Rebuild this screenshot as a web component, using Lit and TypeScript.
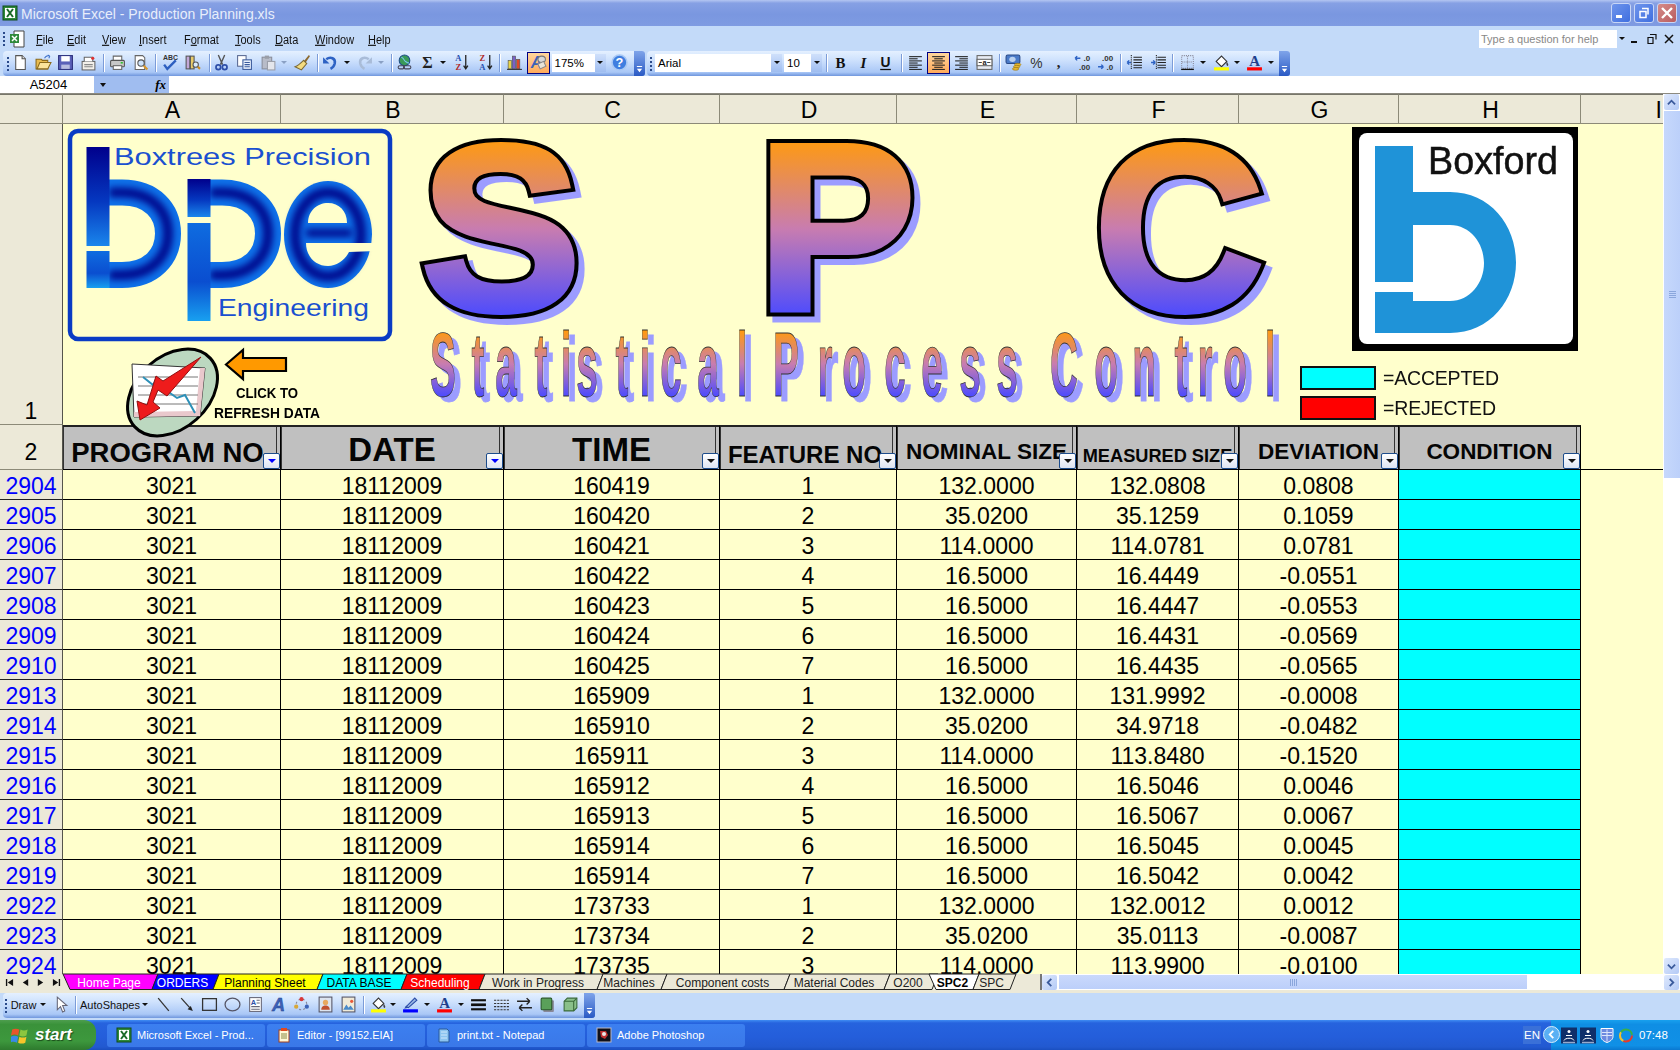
import { LitElement, html, css, svg, TemplateResult } from "lit";
import { customElement } from "lit/decorators.js";

// one toolbar entry: c = centre x on the page, k = icon key or special slot
type Item = { c: number; k: string; w?: number };

const dd = "dd";
const sep = "sep";

const standardBar: Item[] = [
  { c: 8, k: "grip", w: 4 }, { c: 20, k: "new" }, { c: 43, k: "open" }, { c: 65, k: "save" }, { c: 88, k: "perm" },
  { c: 103.5, k: sep, w: 1 }, { c: 117, k: "print" }, { c: 140, k: "preview" }, { c: 155, k: sep, w: 1 },
  { c: 170, k: "spell" }, { c: 192, k: "research" }, { c: 209, k: sep, w: 1 }, { c: 221, k: "cut" }, { c: 244, k: "copy" },
  { c: 268, k: "paste" }, { c: 284, k: "ddg", w: 8 }, { c: 302, k: "brush" }, { c: 317, k: sep, w: 1 },
  { c: 330, k: "undo" }, { c: 347, k: dd, w: 8 }, { c: 364, k: "redo" }, { c: 381, k: "ddg", w: 8 }, { c: 391, k: sep, w: 1 },
  { c: 404, k: "link" }, { c: 427, k: "sigma" }, { c: 443, k: dd, w: 8 }, { c: 461, k: "az" }, { c: 485, k: "za" },
  { c: 499, k: sep, w: 1 }, { c: 514, k: "chart" }, { c: 538, k: "drawing", w: 23 }, { c: 578.5, k: "zoom", w: 54 }, { c: 619, k: "help" },
];

const formatBar: Item[] = [
  { c: 651, k: "grip", w: 4 }, { c: 718.5, k: "font", w: 127 }, { c: 803, k: "size", w: 38 }, { c: 826, k: sep, w: 1 },
  { c: 840, k: "bold" }, { c: 863, k: "italic" }, { c: 885, k: "under" }, { c: 901, k: sep, w: 1 },
  { c: 915, k: "left" }, { c: 938, k: "center", w: 23 }, { c: 961, k: "right" }, { c: 984, k: "merge" }, { c: 999, k: sep, w: 1 },
  { c: 1013, k: "currency" }, { c: 1036, k: "percent" }, { c: 1058, k: "comma" }, { c: 1082, k: "incdec" }, { c: 1105, k: "decdec" },
  { c: 1120, k: sep, w: 1 }, { c: 1134, k: "outdent" }, { c: 1158, k: "indent" }, { c: 1172, k: sep, w: 1 },
  { c: 1187, k: "borders" }, { c: 1203, k: dd, w: 8 }, { c: 1221, k: "fill" }, { c: 1237, k: dd, w: 8 },
  { c: 1254, k: "fontcolor" }, { c: 1271, k: dd, w: 8 },
];

const drawBar: Item[] = [
  { c: 6, k: "grip", w: 4 }, { c: 23.5, k: "t:Draw", w: 26 }, { c: 43, k: dd, w: 8 }, { c: 60, k: "cursor" }, { c: 75.5, k: sep, w: 1 },
  { c: 110, k: "t:AutoShapes", w: 60 }, { c: 145, k: dd, w: 8 }, { c: 163, k: "line" }, { c: 186, k: "arrow" }, { c: 209, k: "rect" },
  { c: 232, k: "oval" }, { c: 255, k: "textbox" }, { c: 278, k: "wordart" }, { c: 301, k: "diagram" }, { c: 325, k: "clipart" },
  { c: 348, k: "picture" }, { c: 363, k: sep, w: 1 }, { c: 378, k: "fill" }, { c: 393, k: dd, w: 8 }, { c: 410, k: "linecolor" },
  { c: 427, k: dd, w: 8 }, { c: 444.5, k: "fontcolor" }, { c: 461, k: dd, w: 8 }, { c: 478, k: "linestyle" }, { c: 501, k: "dash" },
  { c: 524, k: "arrows" }, { c: 547, k: "shadow" }, { c: 570, k: "cube" },
];

const lines = (xs: number[], ws: number[]) =>
  ws.map((w, i) => svg`<rect x=${xs[i]} y=${2 + i * 2} width=${w} height="1" fill="#222"/>`);

const icons: Record<string, TemplateResult | TemplateResult[]> = {
  new: svg`<path d="M3.5 1.5h6l3 3v10h-9z" fill="#fff" stroke="#555"/><path d="M9.500 1.500v3h3" fill="#ddd" stroke="#555"/>`,
  open: svg`<path d="M1 5h5l1 1h5v8H1z" fill="#e8bb50" stroke="#8a6a1c"/><path d="M2 14l2.500-6H15l-3 6z" fill="#fbe39a" stroke="#8a6a1c"/><path d="M9 4c1-2 3-3 5-2M14 2l-2-1M14 2l-1 2" fill="none" stroke="#3a6ec8"/>`,
  save: svg`<rect x="1.500" y="1.500" width="13" height="13" fill="#5a60b8" stroke="#2b2f7c"/><rect x="4" y="2" width="8" height="5" fill="#fff"/><rect x="4" y="10" width="8" height="4" fill="#b8bce0"/>`,
  perm: svg`<rect x="2" y="7" width="12" height="8" fill="#f3f0ea" stroke="#666"/><path d="M4 7V3h8v4" fill="#fff" stroke="#666"/><circle cx="12" cy="4" r="1.500" fill="#e03030"/><path d="M4 10h8M4 12h8" stroke="#888"/>`,
  print: svg`<path d="M4 6V2h8v4" fill="#fff" stroke="#666"/><rect x="1.500" y="6" width="13" height="6" rx="1" fill="#c8c8c8" stroke="#555"/><rect x="4" y="11" width="8" height="3.500" fill="#fff" stroke="#666"/><rect x="11" y="7.500" width="2" height="1.500" fill="#2dc22d"/>`,
  preview: svg`<path d="M3 1.500h7l2 2v11H3z" fill="#fff" stroke="#666"/><circle cx="8.500" cy="8.500" r="3" fill="#cfe4fb" stroke="#555"/><path d="M11 11l3.500 3.500" stroke="#d8982c" stroke-width="2"/>`,
  spell: svg`<text x="8" y="6" font-size="6.500" font-weight="700" text-anchor="middle" font-family="Liberation Sans" fill="#333">ABC</text><path d="M2 10l3 4 8-8" fill="none" stroke="#2d5fc0" stroke-width="2.200"/>`,
  research: svg`<rect x="2" y="2" width="3.500" height="12" fill="#c3a8d8" stroke="#555"/><rect x="6" y="2" width="3.500" height="12" fill="#e9cc6a" stroke="#555"/><circle cx="11" cy="10" r="2.500" fill="#dcecfb" stroke="#555"/><path d="M13 12l2 2" stroke="#c88a20" stroke-width="2"/>`,
  cut: svg`<path d="M5 1l4 9M11 1L7 10" stroke="#555" stroke-width="1.300"/><circle cx="5" cy="12.500" r="2.200" fill="none" stroke="#2d4ea8" stroke-width="1.600"/><circle cx="11" cy="12.500" r="2.200" fill="none" stroke="#2d4ea8" stroke-width="1.600"/>`,
  copy: svg`<rect x="1.500" y="1.500" width="8" height="10" fill="#fff" stroke="#5a6a94"/><rect x="6.500" y="5.500" width="8" height="9" fill="#e8f0fc" stroke="#3a5a9c"/><path d="M8 8h5M8 10h5M8 12h5" stroke="#3a5a9c"/>`,
  paste: svg`<rect x="2" y="3" width="9" height="11" fill="#b8bcc8" stroke="#8a8e9a"/><rect x="7" y="7" width="7" height="8" fill="#e4e6ec" stroke="#9a9ea8"/><rect x="4.500" y="1.500" width="4" height="3" fill="#9a9ea8"/>`,
  brush: svg`<path d="M9 7l5-6 1 1-4 6z" fill="#8c6a30"/><path d="M9 6l3 3-5 6-6-3c3-1 5-3 8-6z" fill="#f4dc80" stroke="#7c6a34"/>`,
  undo: svg`<path d="M4 5c4-3 9-1 8 4-.500 2-2 4-4 5" fill="none" stroke="#2d62c4" stroke-width="2.400"/><path d="M1 3v6h6z" fill="#2d62c4"/>`,
  redo: svg`<path d="M12 5c-4-3-9-1-8 4 .500 2 2 4 4 5" fill="none" stroke="#a9bcd8" stroke-width="2.400"/><path d="M15 3v6H9z" fill="#a9bcd8"/>`,
  link: svg`<circle cx="8" cy="6" r="5" fill="#3a9a58" stroke="#1e4e86"/><path d="M5 3c3 1 2 3 4 4s2 2 3 1" stroke="#7cc8ef" fill="none"/><rect x="2" y="11" width="6" height="3" rx="1.500" fill="none" stroke="#445"/><rect x="7" y="11" width="7" height="3" rx="1.500" fill="none" stroke="#445"/>`,
  sigma: svg`<text x="8" y="13" font-size="15" font-weight="700" text-anchor="middle" font-family="Liberation Serif" fill="#222">Σ</text>`,
  az: svg`<text x="5" y="7" font-size="8" font-weight="700" text-anchor="middle" font-family="Liberation Serif" fill="#2850b0">A</text><text x="5" y="15" font-size="8" font-weight="700" text-anchor="middle" font-family="Liberation Serif" fill="#b02828">Z</text><path d="M12 1v12M10 11l2 3 2-3" fill="none" stroke="#222" stroke-width="1.200"/>`,
  za: svg`<text x="5" y="7" font-size="8" font-weight="700" text-anchor="middle" font-family="Liberation Serif" fill="#b02828">Z</text><text x="5" y="15" font-size="8" font-weight="700" text-anchor="middle" font-family="Liberation Serif" fill="#2850b0">A</text><path d="M12 1v12M10 11l2 3 2-3" fill="none" stroke="#222" stroke-width="1.200"/>`,
  chart: svg`<rect x="2" y="6" width="3" height="8" fill="#e8d44a" stroke="#555" stroke-width=".6"/><rect x="6" y="2" width="3" height="12" fill="#7860c8" stroke="#555" stroke-width=".6"/><rect x="10" y="5" width="3" height="9" fill="#e04828" stroke="#555" stroke-width=".6"/><path d="M1 14.500h14" stroke="#333"/>`,
  drawing: svg`<text x="6" y="13" font-size="15" font-style="italic" font-weight="700" font-family="Liberation Sans" text-anchor="middle" fill="#3c62b8">A</text><ellipse cx="11" cy="5" rx="3.500" ry="3" fill="#d8d8d8" stroke="#777"/><rect x="8" y="8" width="6" height="5" fill="#e8e4d8" stroke="#888" transform="rotate(-25 11 10)"/>`,
  help: svg`<circle cx="8" cy="8" r="7" fill="#3f7ee0" stroke="#a8c8f4" stroke-width="1.500"/><text x="8" y="12.500" font-size="12" font-weight="700" text-anchor="middle" font-family="Liberation Sans" fill="#fff">?</text>`,
  bold: svg`<text x="8" y="13" font-size="14" font-weight="700" text-anchor="middle" font-family="Liberation Serif" fill="#111">B</text>`,
  italic: svg`<text x="8" y="13" font-size="14" font-weight="700" font-style="italic" text-anchor="middle" font-family="Liberation Serif" fill="#111">I</text>`,
  under: svg`<text x="8" y="12" font-size="13" font-weight="700" text-anchor="middle" font-family="Liberation Sans" fill="#111">U</text><rect x="3" y="14" width="10" height="1.200" fill="#111"/>`,
  left: lines([2, 2, 2, 2, 2, 2, 2], [12, 8, 12, 8, 12, 8, 12]),
  center: lines([2, 4, 2, 4, 2, 4, 2], [12, 8, 12, 8, 12, 8, 12]),
  right: lines([2, 6, 2, 6, 2, 6, 2], [12, 8, 12, 8, 12, 8, 12]),
  merge: svg`<rect x="1" y="1.500" width="14" height="13" fill="#e8ecf4" stroke="#666"/><rect x="1" y="5" width="14" height="6" fill="#fff" stroke="#666"/><text x="8" y="10.500" font-size="7" font-weight="700" text-anchor="middle" font-family="Liberation Sans" fill="#222">a</text><path d="M2.500 8h3M13.500 8h-3" stroke="#444"/>`,
  currency: svg`<rect x="1" y="1" width="13" height="8" rx="1.500" fill="#4a7ac8" stroke="#2a4a88"/><ellipse cx="7" cy="5" rx="3" ry="2.500" fill="#b8d0f0"/><ellipse cx="12" cy="10" rx="3" ry="1.300" fill="#e8b830" stroke="#8a6a10" stroke-width=".5"/><ellipse cx="11" cy="12" rx="3" ry="1.300" fill="#e8b830" stroke="#8a6a10" stroke-width=".5"/><ellipse cx="10" cy="14" rx="3" ry="1.300" fill="#e8b830" stroke="#8a6a10" stroke-width=".5"/>`,
  percent: svg`<text x="8" y="13" font-size="13" text-anchor="middle" font-family="Liberation Sans" fill="#333">%</text>`,
  comma: svg`<text x="8" y="12" font-size="14" font-weight="700" text-anchor="middle" font-family="Liberation Serif" fill="#222">,</text>`,
  incdec: svg`<path d="M1 4h5M1 4l2-2M1 4l2 2" stroke="#2d62c4" fill="none" stroke-width="1.300"/><text x="12" y="7" font-size="7.500" font-weight="700" text-anchor="middle" font-family="Liberation Sans" fill="#333">.0</text><text x="10" y="15" font-size="7.500" font-weight="700" text-anchor="middle" font-family="Liberation Sans" fill="#333">.00</text>`,
  decdec: svg`<path d="M1 12h5M6 12l-2-2M6 12l-2 2" stroke="#2d62c4" fill="none" stroke-width="1.300"/><text x="10" y="7" font-size="7.500" font-weight="700" text-anchor="middle" font-family="Liberation Sans" fill="#333">.00</text><text x="12" y="15" font-size="7.500" font-weight="700" text-anchor="middle" font-family="Liberation Sans" fill="#333">.0</text>`,
  outdent: svg`<path d="M7 3h8M7 5.500h8M7 8h8M7 10.500h8M7 13h8" stroke="#222"/><path d="M5 8H1M1 8l2-2M1 8l2 2" stroke="#2d62c4" fill="none" stroke-width="1.300"/><path d="M5 1v14" stroke="#222" stroke-dasharray="1 1"/>`,
  indent: svg`<path d="M7 3h8M7 5.500h8M7 8h8M7 10.500h8M7 13h8" stroke="#222"/><path d="M1 8h4M5 8L3 6M5 8l-2 2" stroke="#2d62c4" fill="none" stroke-width="1.300"/><path d="M6 1v14" stroke="#222" stroke-dasharray="1 1"/>`,
  borders: svg`<rect x="2.500" y="1.500" width="11" height="12" fill="none" stroke="#889" stroke-dasharray="1 1"/><path d="M8 2v12M3 7.500h10" stroke="#889" stroke-dasharray="1 1"/><path d="M2 14.500h12" stroke="#111" stroke-width="1.200"/>`,
  fill: svg`<path d="M3 7l5-5 5 5-5 5z" fill="#fff" stroke="#333"/><path d="M13 7c1 2 2 3 1 4s-2-2-1-4z" fill="#444"/><rect x="1" y="12.500" width="14" height="3" fill="#ffff00"/>`,
  linecolor: svg`<path d="M4 10l8-8 2 2-8 7z" fill="#9ab8e4" stroke="#2d4ea8"/><path d="M2 12l2-3 2 2z" fill="#2d4ea8"/><rect x="1" y="12.500" width="14" height="3" fill="#0000ff"/>`,
  fontcolor: svg`<text x="8" y="11.500" font-size="14" font-weight="700" text-anchor="middle" font-family="Liberation Serif" fill="#1f3f8c">A</text><rect x="1" y="12.500" width="14" height="3" fill="#ff0000"/>`,
  cursor: svg`<path d="M5 1v12l3-3 2 5 2-1-2-5h4z" fill="#fff" stroke="#667"/>`,
  line: svg`<path d="M3 2l10 12" stroke="#333" stroke-width="1.200"/>`,
  arrow: svg`<path d="M3 2l8 9" stroke="#333" stroke-width="1.200"/><path d="M14 14l-5-1.500 3-3z" fill="#222"/>`,
  rect: svg`<rect x="1.500" y="2.500" width="13" height="11" fill="none" stroke="#333" stroke-width="1.200"/>`,
  oval: svg`<ellipse cx="8" cy="8" rx="7" ry="6" fill="none" stroke="#556" stroke-width="1.200"/>`,
  textbox: svg`<rect x="2.500" y="1.500" width="11" height="13" fill="#fff" stroke="#667"/><text x="6" y="8" font-size="7" font-weight="700" text-anchor="middle" font-family="Liberation Sans" fill="#2d4ea8">A</text><path d="M9 4h3M9 6.500h3M4 10h8M4 12.500h8" stroke="#667"/>`,
  wordart: svg`<text x="8" y="14" font-size="17" font-weight="700" font-style="italic" text-anchor="middle" font-family="Liberation Sans" fill="#3c62b8" stroke="#1f3f8c" stroke-width=".4">A</text>`,
  diagram: svg`<circle cx="8" cy="8" r="5" fill="none" stroke="#889" stroke-dasharray="2 2"/><circle cx="8" cy="3" r="2" fill="#d83838"/><circle cx="3" cy="10" r="2" fill="#d8a838"/><circle cx="13" cy="10" r="2" fill="#3c62b8"/>`,
  clipart: svg`<rect x="2" y="1" width="12" height="14" fill="#dce4f0" stroke="#556"/><circle cx="8" cy="6" r="2.500" fill="#e8a860"/><path d="M4 13c0-3 2-4 4-4s4 1 4 4z" fill="#c05030"/>`,
  picture: svg`<rect x="2" y="1" width="12" height="14" fill="#f0ead8" stroke="#556"/><path d="M3 13l3-5 2 3 2-2 3 4z" fill="#4a8ac8"/><circle cx="11" cy="5" r="1.500" fill="#e85838"/>`,
  linestyle: svg`<rect x="1" y="3" width="14" height="2" fill="#111"/><rect x="1" y="7" width="14" height="2.500" fill="#111"/><rect x="1" y="11.500" width="14" height="2" fill="#111"/>`,
  dash: svg`<path d="M1 4h14M1 7h14M1 10h14M1 13h14" stroke="#333" stroke-dasharray="2 1"/>`,
  arrows: svg`<path d="M1 5h12M13 5l-3-3M13 5l-3 3M15 11H3M3 11l3-3M3 11l3 3" fill="none" stroke="#222" stroke-width="1.300"/>`,
  shadow: svg`<rect x="4" y="4" width="10" height="11" rx="1" fill="#889"/><rect x="2" y="2" width="10" height="11" rx="1" fill="#5aa05a" stroke="#2a5a2a"/>`,
  cube: svg`<path d="M2 5l3-3h9v9l-3 3H2z" fill="#8ac08a" stroke="#3a6a3a"/><path d="M2 5h9v9M11 5l3-3" fill="none" stroke="#3a6a3a"/>`,
  xl: svg`<rect x="1" y="1" width="14" height="14" fill="#2f8a3a" stroke="#0f4a1a"/><rect x="3" y="3" width="10" height="10" fill="#fff"/><path d="M5 4l6 8M11 4l-6 8" stroke="#1a6a28" stroke-width="2"/>`,
  editor: svg`<rect x="3" y="3" width="10" height="12" fill="#fff8d8" stroke="#a04020"/><rect x="5" y="1" width="6" height="3" fill="#e04820"/><path d="M5 7h6M5 9h6M5 11h6" stroke="#884"/>`,
  notepad: svg`<path d="M3 2h8l2 2v11H3z" fill="#8cc4f0" stroke="#2a5a9a"/><path d="M5 5h6M5 8h6M5 11h6" stroke="#cfe8fb"/>`,
  photoshop: svg`<rect x="1" y="1" width="14" height="14" fill="#101018" stroke="#b8b8c8"/><path d="M4 4h6l2 4-3 4-4-2z" fill="#c03030"/><circle cx="8" cy="7" r="2" fill="#e8e8e8"/>`,
  flag: svg`<path d="M1 3c2-1 4-1 6 0l-1 5c-2-1-4-1-6 0z" fill="#e8552a"/><path d="M8 3c2 1 4 1 6 0l-1 5c-2 1-4 1-6 0z" fill="#8cc63f"/><path d="M0 9c2-1 4-1 6 0l-1 5c-2-1-4-1-6 0z" fill="#3a8ae8"/><path d="M7 9c2 1 4 1 6 0l-1 5c-2 1-4 1-6 0z" fill="#f7c52a"/>`,
  tray: svg`<rect x="0" y="0" width="16" height="16" fill="#0f2f6a"/><circle cx="8" cy="4" r="1.500" fill="#fff"/><path d="M5 8h6M3 13c1-3 9-3 10 0" stroke="#fff" fill="none"/><path d="M2 15h12" stroke="#9ac" stroke-width="1.500"/>`,
  shield: svg`<path d="M2 1h12v8c0 3-3 5-6 6-3-1-6-3-6-6z" fill="#6c8ae0" stroke="#fff"/><path d="M8 2v12M3 5h10M3 8h10" stroke="#dce6fb"/>`,
  swirl: svg`<circle cx="8" cy="8" r="6" fill="none" stroke="#e83a2a" stroke-width="2" stroke-dasharray="12 26"/><circle cx="8" cy="8" r="6" fill="none" stroke="#f2c030" stroke-width="2" stroke-dasharray="10 28" stroke-dashoffset="-12"/><circle cx="8" cy="8" r="6" fill="none" stroke="#3ab04a" stroke-width="2" stroke-dasharray="14 24" stroke-dashoffset="-22"/>`,
};

// x = left edge of the label on the page, u = index of the accelerator letter
const menus = [
  { label: "File", u: 0, x: 36 },
  { label: "Edit", u: 0, x: 67 },
  { label: "View", u: 0, x: 102 },
  { label: "Insert", u: 0, x: 139 },
  { label: "Format", u: 1, x: 184 },
  { label: "Tools", u: 0, x: 235 },
  { label: "Data", u: 0, x: 275 },
  { label: "Window", u: 0, x: 315 },
  { label: "Help", u: 0, x: 368 },
];

const columns = ["A", "B", "C", "D", "E", "F", "G", "H"];

const headers = [
  { label: "PROGRAM NO", cls: "h27", filtered: true },
  { label: "DATE", cls: "h32", filtered: true },
  { label: "TIME", cls: "h32", filtered: false },
  { label: "FEATURE NO", cls: "h24", filtered: false },
  { label: "NOMINAL SIZE", cls: "h22", filtered: false },
  { label: "MEASURED SIZE", cls: "h18", filtered: false },
  { label: "DEVIATION", cls: "h22", filtered: false },
  { label: "CONDITION", cls: "h22", filtered: false },
];

const rows = [
  ["2904", "160419", "1", "132.0000", "132.0808", "0.0808"],
  ["2905", "160420", "2", "35.0200", "35.1259", "0.1059"],
  ["2906", "160421", "3", "114.0000", "114.0781", "0.0781"],
  ["2907", "160422", "4", "16.5000", "16.4449", "-0.0551"],
  ["2908", "160423", "5", "16.5000", "16.4447", "-0.0553"],
  ["2909", "160424", "6", "16.5000", "16.4431", "-0.0569"],
  ["2910", "160425", "7", "16.5000", "16.4435", "-0.0565"],
  ["2913", "165909", "1", "132.0000", "131.9992", "-0.0008"],
  ["2914", "165910", "2", "35.0200", "34.9718", "-0.0482"],
  ["2915", "165911", "3", "114.0000", "113.8480", "-0.1520"],
  ["2916", "165912", "4", "16.5000", "16.5046", "0.0046"],
  ["2917", "165913", "5", "16.5000", "16.5067", "0.0067"],
  ["2918", "165914", "6", "16.5000", "16.5045", "0.0045"],
  ["2919", "165914", "7", "16.5000", "16.5042", "0.0042"],
  ["2922", "173733", "1", "132.0000", "132.0012", "0.0012"],
  ["2923", "173734", "2", "35.0200", "35.0113", "-0.0087"],
  ["2924", "173735", "3", "114.0000", "113.9900", "-0.0100"],
];

const sheets = [
  { name: "Home Page", w: 86, cls: "magenta" },
  { name: "ORDERS", w: 61, cls: "blue" },
  { name: "Planning Sheet", w: 104, cls: "yellow" },
  { name: "DATA BASE", w: 84, cls: "cyan" },
  { name: "Scheduling", w: 78, cls: "red" },
  { name: "Work in Progress", w: 118, cls: "" },
  { name: "Machines", w: 64, cls: "" },
  { name: "Component costs", w: 123, cls: "" },
  { name: "Material Codes", w: 100, cls: "" },
  { name: "O200", w: 48, cls: "" },
  { name: "SPC2", w: 41, cls: "active" },
  { name: "SPC", w: 37, cls: "" },
];

const tasks = [
  { icon: "xl", label: "Microsoft Excel - Prod..." },
  { icon: "editor", label: "Editor - [99152.EIA]" },
  { icon: "notepad", label: "print.txt - Notepad" },
  { icon: "photoshop", label: "Adobe Photoshop" },
];

const title = "Statistical Process Control";
const titleX = [443, 478, 506, 541, 566, 587, 622, 645, 671, 708, 742, 765, 786, 825, 854, 895, 932, 970, 1007, 1035, 1064, 1106, 1144, 1181, 1205, 1235, 1270];
const titleScale = 0.43;

@customElement("app-root")
export class AppRoot extends LitElement {
  static styles = css`
    :host { display: block; width: 1680px; height: 1050px; overflow: hidden; font-family: "Liberation Sans", Arial, sans-serif; background: #c3daf9; color: #000; }
    .app { display: flex; flex-direction: column; height: 1050px; }

    .titlebar { height: 26px; display: flex; align-items: center; gap: 3px; padding: 0 3px 0 2px; background: linear-gradient(#b4c6f2 0, #86a0e4 12%, #7a97e0 55%, #7f9be2 100%); color: #e8eefb; font-size: 14px; flex: none; box-sizing: border-box; }
    .titlebar .name { flex: 1; padding-top: 1px; }
    .win { width: 20px; height: 20px; border-radius: 3px; border: 1px solid #c8d6f6; background: linear-gradient(135deg, #6f95ec, #3f6fe0); box-sizing: border-box; display: flex; align-items: center; justify-content: center; }
    .win.close { background: linear-gradient(135deg, #d68c88, #b85c60); }
    .win svg { width: 14px; height: 14px; }

    .menubar { height: 25px; flex: none; display: flex; align-items: center; padding-left: 3px; font-size: 11px; color: #111; }
    .menu-grip { width: 2px; height: 14px; background-image: linear-gradient(#2a4a8a 50%, transparent 50%); background-size: 2px 4px; flex: none; }
    .menu-icon { width: 20px; height: 20px; margin-left: 3px; flex: none; }
    .menu-list { display: flex; margin-left: 8px; transform: scaleY(1.15); }
    .menu-list span { display: block; flex: none; }
    .helpbox { margin-left: auto; width: 148px; height: 18px; background: #fff; display: flex; align-items: center; color: #888; font-size: 11px; padding-left: 2px; box-sizing: border-box; justify-content: space-between; }
    .helpbox i { width: 10px; height: 18px; background: #c3daf9; display: flex; align-items: center; justify-content: center; }
    .doc-btns { display: flex; gap: 7px; width: 53px; padding-left: 3px; box-sizing: border-box; font-size: 13px; align-items: center; }
    .doc-btns svg { width: 10px; height: 10px; }

    .toolbars { height: 25px; flex: none; display: flex; padding-left: 3px; }
    .bar { display: flex; align-items: center; height: 25px; padding-bottom: 2px; border-radius: 4px 3px 3px 4px; background: linear-gradient(#e4f0ff 0, #cfe2fd 35%, #a9c7f6 85%, #6f96dd 100%); position: relative; box-sizing: border-box; }
    .bar.standard { width: 642px; }
    .bar.format { width: 643px; margin-left: 2px; }
    .bar.draw { width: 592px; height: 25px; }
    .chev { margin-left: auto; width: 11px; align-self: stretch; margin-bottom: -2px; background: linear-gradient(#7fa4ea, #2a5ac4); border-radius: 0 3px 3px 0; display: flex; align-items: flex-end; justify-content: center; padding-bottom: 3px; box-sizing: border-box; }
    .chev svg { width: 7px; height: 7px; }
    .slot { flex: none; display: flex; align-items: center; justify-content: center; height: 22px; }
    .slot svg.ic { width: 17px; height: 17px; flex: none; overflow: visible; }
    .slot.sep { height: 18px; background: #7c9cd8; box-shadow: 1px 0 0 #fff; }
    .slot.grip { height: 16px; background-image: linear-gradient(#2a4a8a 50%, transparent 50%); background-size: 2px 4px; background-repeat: repeat-y; background-position: center; }
    .slot.active { background: linear-gradient(#ffd8a0, #ffa858); outline: 1px solid #000080; outline-offset: -1px; }
    .slot .arrow { width: 0; height: 0; border-left: 3px solid transparent; border-right: 3px solid transparent; border-top: 3px solid #111; }
    .slot .arrow.grey { border-top-color: #8aa0c4; }
    .slot.label { font-size: 11px; color: #111; white-space: nowrap; }
    .combo { width: 100%; height: 18px; background: #fff; display: flex; align-items: center; justify-content: space-between; font-size: 11.500px; padding-left: 3px; box-sizing: border-box; }
    .combo i { width: 11px; height: 18px; background: linear-gradient(#cfe0fb, #9fbdf0); display: flex; align-items: center; justify-content: center; }

    .formula { height: 17px; flex: none; display: flex; background: #fff; border-bottom: 1px solid #8c8a80; font-size: 13px; box-sizing: content-box; }
    .namebox { width: 91px; margin-left: 3px; text-align: center; line-height: 17px; }
    .fx { width: 75px; background: #a0bdf0; display: flex; align-items: center; justify-content: space-between; padding: 0 3px 0 6px; box-sizing: border-box; font: italic 700 13px "Liberation Serif", serif; }
    .fx .arrow { width: 0; height: 0; border-left: 3.500px solid transparent; border-right: 3.500px solid transparent; border-top: 4px solid #111; }

    .workspace { height: 880px; flex: none; display: flex; background: #ffffcc; }
    .sheet { width: 1663px; height: 880px; overflow: hidden; position: relative; display: grid; grid-template-columns: 63px 218px 223px 216px 177px 180px 162px 160px 182px 82px; grid-auto-rows: 30px; grid-template-rows: 30px 301px 45px; font-size: 23px; line-height: 1; }
    .cell, .head, .rowh, .ch { display: flex; align-items: center; justify-content: center; box-sizing: border-box; overflow: hidden; white-space: nowrap; }
    .ch { background: #ece9d8; border-right: 1px solid #8c8a78; border-bottom: 1px solid #8c8a78; border-top: 1px solid #77766a; font-size: 23px; padding: 3px 0 0 2px; }
    .ch.more { justify-content: flex-end; border-right: 0; padding: 3px 1px 0 0; }
    .rowh { background: #ece9d8; border-right: 1px solid #55544c; border-bottom: 1px solid #222; color: #0000ff; padding-top: 3px; }
    .rowh.dark { color: #000; border-bottom-color: #8c8a78; padding-top: 11px; }
    .rowh.top { align-items: flex-end; padding: 0 0 1px; }
    .banner { grid-column: 2 / -1; background: #ffffcc; }
    .cell { background: #ffffcc; border-right: 1px solid #000; border-bottom: 1px solid #000; padding-top: 3px; }
    .cell.ok { background: #00ffff; }
    .blank { background: #ffffcc; }
    .blank.line { border-bottom: 1px solid #000; }
    .head { position: relative; background: #c0c0c0; font-weight: 700; border-top: 2px solid #222; border-bottom: 1px solid #000; border-right: 1px solid #000; box-shadow: inset -3px 0 0 #c0c0c0, inset -4px 0 0 #333, inset 1px 0 0 #333; color: #050505; }
    .h32 { font-size: 33px; padding-top: 3px; }
    .h27 { font-size: 27.500px; padding: 9px 8px 0 0; }
    .h24 { font-size: 24px; padding: 13px 6px 0 0; }
    .h22 { font-size: 22.500px; padding-top: 9px; }
    .h18 { font-size: 18.200px; padding-top: 16px; }
    .filter { position: absolute; right: 0; bottom: 0; width: 17px; height: 16px; box-sizing: border-box; border: 1px solid #1c4c8c; border-radius: 2px; background: linear-gradient(#fff, #dde4f2); display: flex; align-items: center; justify-content: center; }
    .filter i { width: 0; height: 0; border-left: 4px solid transparent; border-right: 4px solid transparent; border-top: 4px solid #111; }
    .filter.on i { border-top-color: #0000ff; }
    .overlay { position: absolute; left: 0; top: 0; pointer-events: none; }
    .shadow-big { filter: drop-shadow(6px 6px 0 #9c9cff); }
    .shadow-small { filter: drop-shadow(6px 5px 0 #9c9cff); }
    .blur { filter: blur(3.500px); }

    .vscroll { width: 17px; flex: none; background: #fff; display: flex; flex-direction: column; padding-left: 1px; box-sizing: border-box; }
    .sbtn { width: 15px; height: 16px; flex: none; background: linear-gradient(135deg, #dfe9fd, #b4caf6); border-radius: 2px; display: flex; align-items: center; justify-content: center; box-sizing: border-box; }
    .sbtn svg { width: 9px; height: 9px; }
    .vthumb { height: 367px; flex: none; margin-top: 1px; background: linear-gradient(90deg, #c6d8fc, #bcd0fa); display: flex; align-items: center; justify-content: center; }
    .grip-lines { width: 7px; height: 7px; background-image: linear-gradient(#8aa6dc 50%, transparent 50%); background-size: 100% 2px; }
    .vrest { flex: 1; }

    .tabs { height: 16px; flex: none; display: flex; background: #ece9d8; font-size: 12px; align-items: stretch; }
    .nav { width: 66px; flex: none; display: flex; align-items: center; justify-content: space-around; padding: 0 2px; box-sizing: border-box; }
    .nav svg { width: 9px; height: 9px; }
    .tab { position: relative; flex: none; display: flex; align-items: center; justify-content: center; box-sizing: border-box; white-space: nowrap; color: #222; padding-top: 1px; }
    .tab svg { position: absolute; left: 0; top: 0; overflow: visible; }
    .tab polygon { fill: #ece9d8; stroke: #222; stroke-width: 1; }
    .tab span { position: relative; }
    .tab.magenta polygon { fill: #ff00ff; } .tab.magenta { color: #fff; }
    .tab.blue polygon { fill: #0000ff; } .tab.blue { color: #fff; }
    .tab.yellow polygon { fill: #ffff00; } .tab.yellow { color: #000; }
    .tab.cyan polygon { fill: #00ffff; } .tab.cyan { color: #000; }
    .tab.red polygon { fill: #ff0000; } .tab.red { color: #fff; }
    .tab.active polygon { fill: #fff; } .tab.active { font-weight: 700; color: #000; }
    .tabfill { width: 30px; flex: none; border-right: 2px solid #777; }
    .hscroll { flex: 1; display: flex; align-items: center; background: #fff; }
    .hscroll .sbtn { height: 15px; }
    .hthumb { width: 468px; height: 14px; margin-left: 2px; flex: none; background: linear-gradient(#cad9fc, #bccffa); display: flex; align-items: center; justify-content: center; }
    .hthumb .grip-lines { width: 7px; height: 7px; background-image: linear-gradient(90deg, #8aa6dc 50%, transparent 50%); background-size: 2px 100%; }
    .hrest { flex: 1; }
    .hpad { width: 1px; flex: none; }

    .gap { height: 3px; flex: none; background: #ece9d8; }
    .drawing { height: 27px; flex: none; padding: 0 0 2px 3px; box-sizing: border-box; }

    .taskbar { height: 30px; flex: none; display: flex; align-items: center; background: linear-gradient(#3f8cf3 0, #2663de 10%, #245edb 55%, #2259d0 90%, #1a4fc0 100%); color: #fff; font-size: 11px; }
    .start { width: 96px; height: 30px; flex: none; box-sizing: border-box; border-radius: 0 12px 12px 0; background: linear-gradient(#4e9e4e 0, #3a923a 15%, #3d983d 70%, #2e7a2e 100%); display: flex; align-items: center; gap: 5px; padding-left: 11px; font: italic 700 17px "Liberation Sans", sans-serif; text-shadow: 1px 1px 1px #1a4a1a; margin-right: 11px; }
    .start svg { width: 19px; height: 19px; }
    .task { width: 158px; height: 23px; margin-right: 2px; flex: none; box-sizing: border-box; border-radius: 3px; background: linear-gradient(#3c7ff0, #3a78e8); display: flex; align-items: center; gap: 5px; padding-left: 9px; white-space: nowrap; overflow: hidden; }
    .task svg { width: 16px; height: 16px; flex: none; }
    .tray { margin-left: auto; width: 129px; height: 30px; background: linear-gradient(#18a0ee 0, #0f8ee4 15%, #1090e6 85%, #0a78d0 100%); position: relative; display: flex; align-items: center; box-sizing: border-box; padding-left: 10px; gap: 3px; }
    .lang { position: absolute; left: -28px; top: 6px; width: 18px; height: 18px; background: #3a70d8; font-size: 11.500px; text-align: center; line-height: 18px; }
    .showhide { position: absolute; left: -8px; top: 6px; width: 17px; height: 17px; border-radius: 50%; background: #5ab0f4; border: 1px solid #d8ecfb; box-sizing: border-box; display: flex; align-items: center; justify-content: center; }
    .showhide svg { width: 9px; height: 9px; }
    .tray .ti { width: 16px; height: 17px; flex: none; }
    .clock { margin-left: 2px; font-size: 11.500px; }
  `;

  // icon slots placed by their centre on the page, offset by the bar's left edge
  private _slots(items: Item[], barLeft: number) {
    let right = barLeft;
    return items.map((it) => {
      const w = it.w ?? 21;
      const left = it.c - w / 2;
      const gap = left - right;
      right = left + w;
      return this._slot(it, w, gap);
    });
  }

  private _slot(it: Item, w: number, gap: number) {
    const style = `width:${w}px;margin-left:${gap}px`;
    const k = it.k;
    if (k === sep || k === "grip") return html`<span class="slot ${k}" style=${style}></span>`;
    if (k === dd) return html`<span class="slot" style=${style}><i class="arrow"></i></span>`;
    if (k === "ddg") return html`<span class="slot" style=${style}><i class="arrow grey"></i></span>`;
    if (k.startsWith("t:")) return html`<span class="slot label" style=${style}>${k.slice(2)}</span>`;
    if (k === "zoom") return html`<span class="slot" style=${style}><span class="combo">175%<i><b class="arrow"></b></i></span></span>`;
    if (k === "font") return html`<span class="slot" style=${style}><span class="combo">Arial<i><b class="arrow"></b></i></span></span>`;
    if (k === "size") return html`<span class="slot" style=${style}><span class="combo">10<i><b class="arrow"></b></i></span></span>`;
    const active = k === "drawing" || k === "center";
    return html`<span class="slot ${active ? "active" : ""}" style=${style}>${this._icon(k)}</span>`;
  }

  private _icon(k: string) {
    return html`<svg class="ic" viewBox="0 0 16 16">${icons[k]}</svg>`;
  }

  private _chevron() {
    return html`<span class="chev"><svg viewBox="0 0 8 8"><path d="M1 0h6v1H1zM1 3h6L4 7z" fill="#fff"/></svg></span>`;
  }

  private _menuItems() {
    return menus.map((m, i) => {
      const next = menus[i + 1];
      const width = next ? next.x - m.x : 30;
      const before = m.label.slice(0, m.u);
      const after = m.label.slice(m.u + 1);
      return html`<span style="width:${width}px">${before}<u>${m.label[m.u]}</u>${after}</span>`;
    });
  }

  private _tabShape(w: number, first: boolean) {
    const h = 16;
    // first and active tabs lean inward on the left, the rest sit on the previous slant
    const leftTop = first ? -3 : 6;
    const leftBottom = first ? 4 : 0;
    return svg`<svg width=${w} height=${h}><polygon points="${leftTop},0 ${w + 6},0 ${w},${h - 0.5} ${leftBottom},${h - 0.5}"></polygon></svg>`;
  }

  private _banner() {
    const bevel = (d: string) => svg`
      <path d=${d} fill="none" stroke="#0f72ea" stroke-width="26"/>
      <path class="blur" d=${d} fill="none" stroke="#00088c" stroke-width="10"/>`;
    const bowlB = "M109 192.500H122C152 192.500 168 211 168 233.500C168 256 152 275 122 275H109";
    const bowlP = "M210 192.500H222C252 192.500 268 211 268 233.500C268 256 252 275 222 275H210";
    return svg`
      <svg class="overlay" width="1663" height="880" viewBox="0 94 1663 880" font-family="Liberation Sans, Arial, sans-serif">
        <defs>
          <linearGradient id="sunsetBig" gradientUnits="userSpaceOnUse" x1="0" y1="-170" x2="0" y2="8">
            <stop offset="0" stop-color="#ff9a10"/><stop offset=".5" stop-color="#c87cb0"/><stop offset="1" stop-color="#4a4aff"/>
          </linearGradient>
          <linearGradient id="sunsetSmall" gradientUnits="userSpaceOnUse" x1="0" y1="331" x2="0" y2="397">
            <stop offset="0" stop-color="#ff9a10"/><stop offset=".5" stop-color="#c87cb0"/><stop offset="1" stop-color="#4a4aff"/>
          </linearGradient>
          <linearGradient id="stemA" x1="0" y1="0" x2="0" y2="1">
            <stop offset="0" stop-color="#00008c"/><stop offset=".55" stop-color="#0538c0"/><stop offset="1" stop-color="#1a86ec"/>
          </linearGradient>
          <linearGradient id="stemB" x1="0" y1="0" x2="0" y2="1">
            <stop offset="0" stop-color="#0f6ce0"/><stop offset=".6" stop-color="#0a4ed0"/><stop offset="1" stop-color="#18a0f0"/>
          </linearGradient>
        </defs>

        <rect x="70" y="131" width="320" height="208" rx="8" fill="#ffffcc" stroke="#0a3cc4" stroke-width="4.500"/>
        <text x="114" y="165" font-size="24" fill="#1a50d0" textLength="257" lengthAdjust="spacingAndGlyphs">Boxtrees Precision</text>
        <text x="218" y="316" font-size="24" fill="#1a50d0" textLength="151" lengthAdjust="spacingAndGlyphs">Engineering</text>

        ${bevel(bowlB)}
        <rect x="86.500" y="147" width="23" height="99" fill="url(#stemA)"/>
        <rect x="86.500" y="251" width="23" height="37" fill="url(#stemB)"/>
        ${bevel(bowlP)}
        <rect x="187.500" y="179" width="23" height="38" fill="url(#stemA)"/>
        <rect x="187.500" y="223" width="23" height="98" fill="url(#stemB)"/>

        <ellipse cx="328" cy="234.500" rx="44" ry="53.500" fill="#0f72ea"/>
        <ellipse class="blur" cx="328" cy="234.500" rx="33" ry="42" fill="none" stroke="#00088c" stroke-width="10"/>
        <path class="blur" d="M306 233H352" stroke="#00088c" stroke-width="8"/>
        <path d="M308 223C308 211 317 203 328 203C339 203 347 211 347 223Z" fill="#ffffcc"/>
        <path d="M306 243H376V251L349 252C345 260 337 266 328 266C315 266 306 256 306 243Z" fill="#ffffcc"/>

        <g class="shadow-big" font-weight="700" text-anchor="middle">
          <g stroke="#000" stroke-width="14" fill="#000">
            <text id="bigS" transform="translate(501 310) scale(1.020 1)" font-size="235">S</text>
            <text id="bigP" transform="translate(836.500 310)" font-size="237">P</text>
            <text id="bigC" transform="translate(1179 310)" font-size="235">C</text>
          </g>
          <g stroke="url(#sunsetBig)" stroke-width="6" fill="url(#sunsetBig)">
            <use href="#bigS"></use>
            <use href="#bigP"></use>
            <use href="#bigC"></use>
          </g>
        </g>

        <g class="shadow-small">
          <text transform="scale(${titleScale} 1)" y="396" font-size="90" font-weight="700" text-anchor="middle" fill="url(#sunsetSmall)" stroke="#333" stroke-width=".8" x=${titleX.map((x) => (x / titleScale).toFixed(1)).join(" ")}>${title}</text>
        </g>

        <path d="M226 364.500L243 350V358H286V371H243V379Z" fill="#ff9900" stroke="#000" stroke-width="2.200"/>
        <ellipse cx="172.500" cy="392.500" rx="51" ry="36" transform="rotate(-42 172.500 392.500)" fill="#bcd8c0" stroke="#000" stroke-width="3"/>
        <path d="M132 364L205 368L200 416L134 417Z" fill="#fff" stroke="#333"/>
        <path d="M200 368L205 368L200 416L134 417V412L196 411Z" fill="#e9c8cc"/>
        <path d="M138 377H198M138 386H198M138 395H198M138 404H198" stroke="#777"/>
        <path d="M143 377L153 385L157 378L170 393L177 398L185 395L195 413" fill="none" stroke="#2c90b8" stroke-width="2"/>
        <path d="M140 420L160 408L153 402L158 390L167 396L201 357L163 381L156 376L147 405L137 401Z" fill="#ee1c1c" stroke="#901010"/>
        <text x="236" y="398" font-size="14.500" font-weight="700" textLength="62" lengthAdjust="spacingAndGlyphs">CLICK TO</text>
        <text x="214" y="417.500" font-size="14.500" font-weight="700" textLength="106" lengthAdjust="spacingAndGlyphs">REFRESH DATA</text>

        <rect x="1352" y="127" width="226" height="224" fill="#000"/>
        <rect x="1359" y="133" width="214" height="211" rx="8" fill="#fff"/>
        <path d="M1375 146H1413V192H1450C1490 192 1516 225 1516 262.500C1516 300 1490 333 1450 333H1375V292H1413V301H1450C1470 301 1484 283 1484 263C1484 243 1470 225 1450 225H1413V282H1375Z" fill="#1f93d8"/>
        <text x="1428" y="174" font-size="38" fill="#111" stroke="#111" stroke-width=".5" textLength="130" lengthAdjust="spacingAndGlyphs">Boxford</text>

        <rect x="1301" y="367" width="74" height="22" fill="#00ffff" stroke="#111" stroke-width="2"/>
        <rect x="1301" y="397" width="74" height="22" fill="#ff0000" stroke="#111" stroke-width="2"/>
        <text x="1383" y="385" font-size="19.500" fill="#111" textLength="116" lengthAdjust="spacing">=ACCEPTED</text>
        <text x="1383" y="415" font-size="19.500" fill="#111" textLength="113" lengthAdjust="spacing">=REJECTED</text>
      </svg>`;
  }

  render() {
    return html`
      <div class="app">
        <div class="titlebar">
          <svg width="16" height="18" viewBox="0 0 16 16">${icons.xl}</svg>
          <span class="name">Microsoft Excel - Production Planning.xls</span>
          <span class="win"><svg viewBox="0 0 14 14"><rect x="2" y="9" width="6" height="3" fill="#fff"/></svg></span>
          <span class="win"><svg viewBox="0 0 14 14"><path d="M5 2.500h6v6M3 5.500h6v6H3z" fill="none" stroke="#fff" stroke-width="1.500"/></svg></span>
          <span class="win close"><svg viewBox="0 0 14 14"><path d="M2 2l10 10M12 2L2 12" stroke="#fff" stroke-width="2.400"/></svg></span>
        </div>

        <div class="menubar">
          <span class="menu-grip"></span>
          <svg class="menu-icon" viewBox="0 0 20 18"><path d="M6 1h10v16H6z" fill="#fff" stroke="#444"/><rect x="2" y="4" width="9" height="9" fill="#2f8a3a"/><path d="M4 6l5 5M9 6l-5 5" stroke="#fff" stroke-width="1.500"/></svg>
          <div class="menu-list">${this._menuItems()}</div>
          <div class="helpbox">Type a question for help<i><svg width="6" height="4" viewBox="0 0 6 4"><path d="M0 0h6L3 3z" fill="#111"/></svg></i></div>
          <div class="doc-btns">
            <svg viewBox="0 0 10 10"><rect x="1" y="7" width="6" height="2" fill="#111"/></svg>
            <svg viewBox="0 0 10 10"><path d="M3 .5h6v5M1 3.500h5v6H1z" fill="none" stroke="#111" stroke-width="1.200"/></svg>
            <svg viewBox="0 0 10 10"><path d="M1 1l8 8M9 1L1 9" stroke="#111" stroke-width="1.500"/></svg>
          </div>
        </div>

        <div class="toolbars">
          <div class="bar standard">${this._slots(standardBar, 3)}${this._chevron()}</div>
          <div class="bar format">${this._slots(formatBar, 647)}${this._chevron()}</div>
        </div>

        <div class="formula">
          <div class="namebox">A5204</div>
          <div class="fx"><i class="arrow"></i><span>fx</span></div>
        </div>

        <div class="workspace">
          <div class="sheet">
            <div class="ch"></div>
            ${columns.map((c) => html`<div class="ch">${c}</div>`)}
            <div class="ch more">I</div>

            <div class="rowh dark top">1</div>
            <div class="banner"></div>

            <div class="rowh dark">2</div>
            ${headers.map((h) => html`
              <div class="head ${h.cls}">
                ${h.label}
                <span class="filter ${h.filtered ? "on" : ""}"><i></i></span>
              </div>`)}
            <div class="blank line"></div>

            ${rows.map((r) => html`
              <div class="rowh">${r[0]}</div>
              <div class="cell">3021</div>
              <div class="cell">18112009</div>
              <div class="cell">${r[1]}</div>
              <div class="cell">${r[2]}</div>
              <div class="cell">${r[3]}</div>
              <div class="cell">${r[4]}</div>
              <div class="cell">${r[5]}</div>
              <div class="cell ok"></div>
              <div class="blank"></div>`)}
            ${this._banner()}
          </div>
          <div class="vscroll">
            <span class="sbtn"><svg viewBox="0 0 10 10"><path d="M1 7l4-4 4 4" fill="none" stroke="#3a5a9c" stroke-width="2"/></svg></span>
            <span class="vthumb"><span class="grip-lines"></span></span>
            <span class="vrest"></span>
            <span class="sbtn"><svg viewBox="0 0 10 10"><path d="M1 3l4 4 4-4" fill="none" stroke="#3a5a9c" stroke-width="2"/></svg></span>
          </div>
        </div>

        <div class="tabs">
          <div class="nav">
            <svg viewBox="0 0 10 10"><path d="M1 1v8h1.500V1zM9 1L3 5l6 4z" fill="#111"/></svg>
            <svg viewBox="0 0 10 10"><path d="M8 1L2 5l6 4z" fill="#111"/></svg>
            <svg viewBox="0 0 10 10"><path d="M2 1l6 4-6 4z" fill="#111"/></svg>
            <svg viewBox="0 0 10 10"><path d="M9 1v8H7.500V1zM1 1l6 4-6 4z" fill="#111"/></svg>
          </div>
          ${sheets.map((s, i) => html`
            <div class="tab ${s.cls}" style="width:${s.w}px">
              ${this._tabShape(s.w, i === 0 || s.cls === "active")}
              <span>${s.name}</span>
            </div>`)}
          <div class="tabfill"></div>
          <div class="hscroll">
            <span class="sbtn"><svg viewBox="0 0 10 10"><path d="M7 1L3 5l4 4" fill="none" stroke="#3a5a9c" stroke-width="2"/></svg></span>
            <span class="hthumb"><span class="grip-lines"></span></span>
            <span class="hrest"></span>
            <span class="sbtn"><svg viewBox="0 0 10 10"><path d="M3 1l4 4-4 4" fill="none" stroke="#3a5a9c" stroke-width="2"/></svg></span>
            <span class="hpad"></span>
          </div>
        </div>
        <div class="gap"></div>

        <div class="drawing">
          <div class="bar draw">${this._slots(drawBar, 3)}${this._chevron()}</div>
        </div>

        <div class="taskbar">
          <div class="start"><svg viewBox="0 0 16 16">${icons.flag}</svg>start</div>
          ${tasks.map((t) => html`<div class="task"><svg viewBox="0 0 16 16">${icons[t.icon]}</svg>${t.label}</div>`)}
          <div class="tray">
            <span class="lang">EN</span>
            <span class="showhide"><svg viewBox="0 0 10 10"><path d="M7 1L3 5l4 4" fill="none" stroke="#fff" stroke-width="2"/></svg></span>
            <svg class="ti" viewBox="0 0 16 16">${icons.tray}</svg>
            <svg class="ti" viewBox="0 0 16 16">${icons.tray}</svg>
            <svg class="ti" viewBox="0 0 16 16">${icons.shield}</svg>
            <svg class="ti" viewBox="0 0 16 16">${icons.swirl}</svg>
            <span class="clock">07:48</span>
          </div>
        </div>
      </div>
    `;
  }
}
